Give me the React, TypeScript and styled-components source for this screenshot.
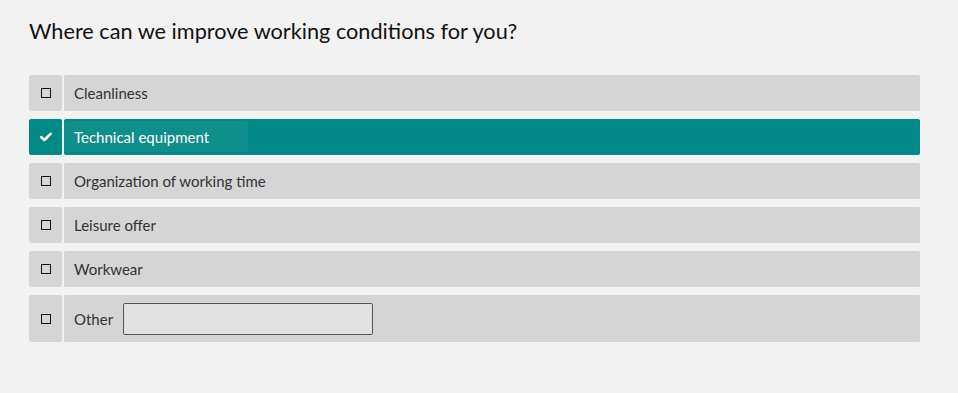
import React, { useState } from 'react';
import styled, { createGlobalStyle } from 'styled-components';

const GlobalStyle = createGlobalStyle`
  html, body {
    margin: 0;
    padding: 0;
    background: #f2f2f2;
  }
  body {
    font-family: 'Lato', 'Liberation Sans', sans-serif;
  }
`;

const Page = styled.div`
  padding: 18px 38px 40px 29px;
`;

const Title = styled.h2`
  margin: 0 0 31px 0;
  font-size: 21.7px;
  line-height: 26px;
  font-weight: 400;
  color: #111;
`;

const List = styled.div`
  display: flex;
  flex-direction: column;
  gap: 8px;
`;

const Row = styled.label<{ $tall?: boolean }>`
  display: flex;
  gap: 2px;
  min-height: ${(p) => (p.$tall ? '47px' : '36px')};
  cursor: pointer;
`;

const Cell = styled.div<{ $active?: boolean }>`
  display: flex;
  align-items: center;
  border-radius: 2px;
  background: ${(p) => (p.$active ? '#008985' : '#d5d5d5')};
`;

const BoxCell = styled(Cell)`
  width: 33px;
  flex: none;
  justify-content: center;
`;

const LabelCell = styled(Cell)`
  flex: 1;
`;

const Square = styled.span`
  width: 8px;
  height: 8px;
  border: 1.5px solid #111;
  display: block;
`;

const Text = styled.span<{ $active?: boolean }>`
  font-size: 15px;
  color: ${(p) => (p.$active ? '#fff' : '#333')};
  padding: 0 10px;
  align-self: stretch;
  display: flex;
  align-items: center;
`;

const Focus = styled.span`
  display: flex;
  align-items: center;
  align-self: stretch;
  margin: 2px 0 3px 0;
  padding-right: 29px;
  background: rgba(255, 255, 255, 0.06);
  border-radius: 1px;
`;

const OtherInput = styled.input`
  width: 250px;
  height: 32px;
  box-sizing: border-box;
  border: 1px solid #555;
  border-radius: 2px;
  background: #e1e1e1;
  font-family: inherit;
  font-size: 15px;
  padding: 0 8px;
  outline: none;
`;

const Check = () => (
  <svg width="12" height="10" viewBox="0 0 12 10">
    <path d="M1.4 5.2 L4.4 8 L10.6 1.8" fill="none" stroke="#fff" strokeWidth="2.6" strokeLinecap="round" strokeLinejoin="round" />
  </svg>
);

const options = [
  'Cleanliness',
  'Technical equipment',
  'Organization of working time',
  'Leisure offer',
  'Workwear',
];

export default function App() {
  const [selected] = useState<string[]>(['Technical equipment']);

  return (
    <Page>
      <GlobalStyle />
      <Title>Where can we improve working conditions for you?</Title>
      <List>
        {options.map((o) => {
          const active = selected.includes(o);
          return (
            <Row key={o}>
              <BoxCell $active={active}>{active ? <Check /> : <Square />}</BoxCell>
              <LabelCell $active={active}>
                {active ? (
                  <Focus>
                    <Text $active>{o}</Text>
                  </Focus>
                ) : (
                  <Text>{o}</Text>
                )}
              </LabelCell>
            </Row>
          );
        })}
        <Row $tall>
          <BoxCell>
            <Square />
          </BoxCell>
          <LabelCell>
            <Text>Other</Text>
            <OtherInput type="text" />
          </LabelCell>
        </Row>
      </List>
    </Page>
  );
}
